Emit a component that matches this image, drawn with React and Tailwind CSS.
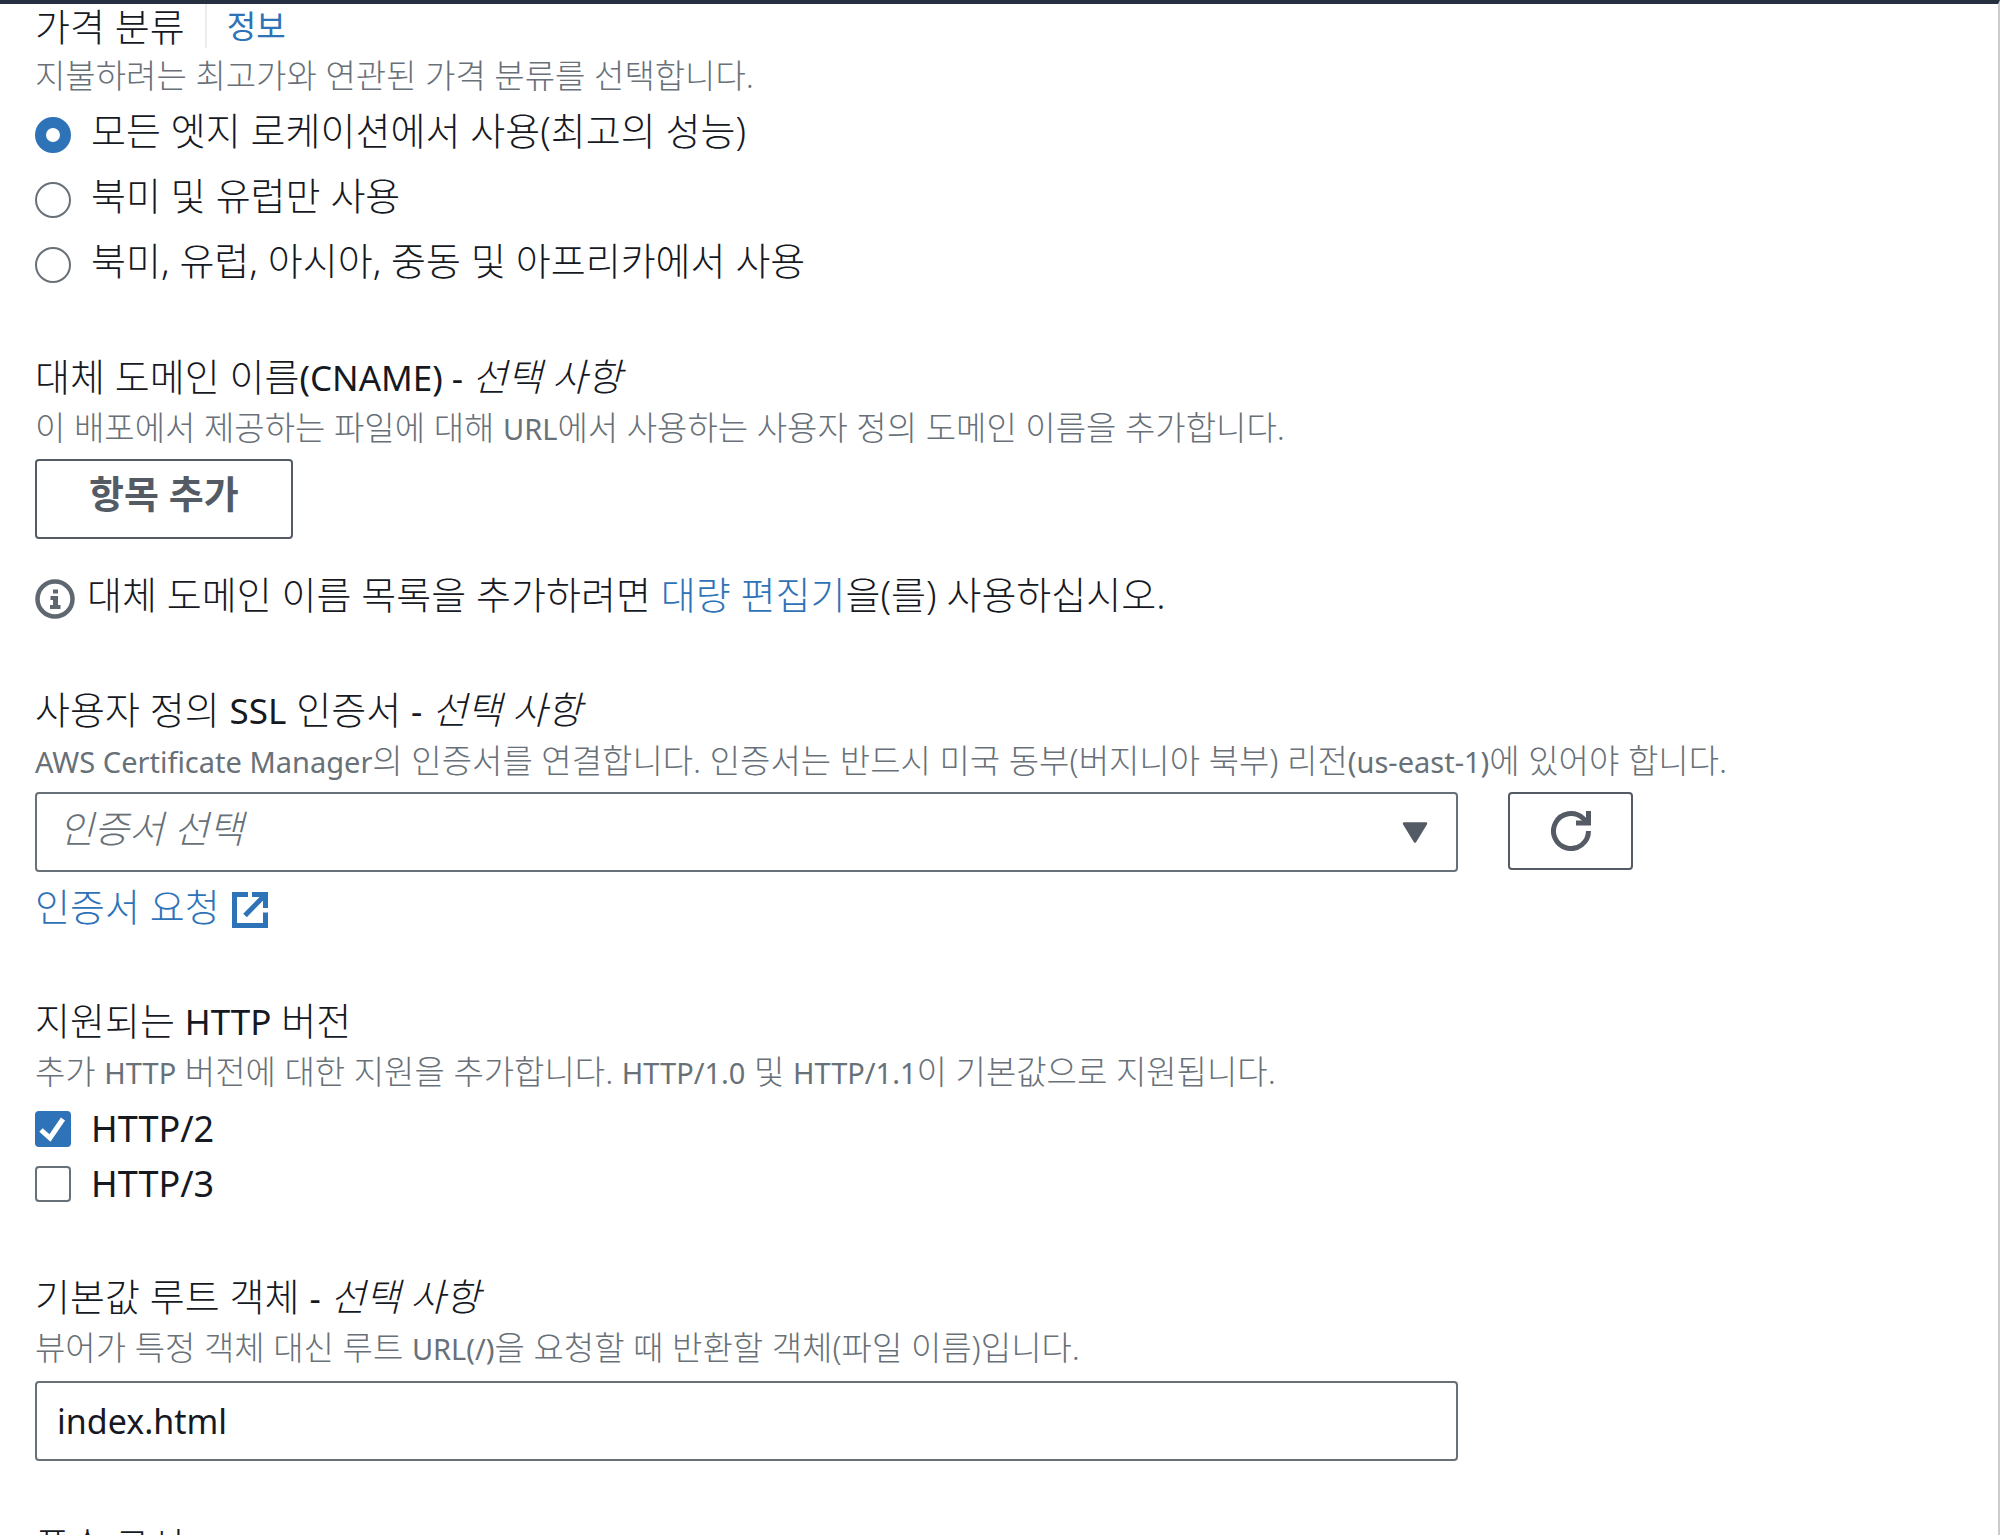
function Latin({ children }) {
  return <span className="text-[35px] font-normal">{children}</span>;
}

function SmallLatin({ children }) {
  return <span className="text-[29px] font-normal">{children}</span>;
}

function Optional() {
  return <i className="font-light">선택 사항</i>;
}

function Field({ label, description, info, htmlFor, children }) {
  const Label = htmlFor ? 'label' : 'h3';
  return (
    <section>
      <div className="flex items-center">
        <Label htmlFor={htmlFor} className="text-[38px] leading-[44px] font-light">{label}</Label>
        {info}
      </div>
      <p className="mt-1 text-[33px] leading-[48px] font-light text-[#687078]">{description}</p>
      {children}
    </section>
  );
}

function Radio({ id, children, defaultChecked }) {
  return (
    <div className="flex items-center gap-5">
      <input
        type="radio"
        name="price-class"
        id={id}
        defaultChecked={defaultChecked}
        className="mt-[10px] size-9 shrink-0 appearance-none rounded-full border-2 border-[#687078] bg-white checked:border-[11px] checked:border-[#2e73b8]"
      />
      <label htmlFor={id} className="text-[38px] leading-[48px] font-light">{children}</label>
    </div>
  );
}

function Checkbox({ id, children, defaultChecked }) {
  return (
    <div className="flex items-center gap-5">
      <span className="relative flex">
        <input
          type="checkbox"
          id={id}
          defaultChecked={defaultChecked}
          className="peer size-9 appearance-none rounded-sm border-2 border-[#687078] bg-white checked:border-[#2e73b8] checked:bg-[#2e73b8]"
        />
        <svg viewBox="0 0 36 36" className="pointer-events-none absolute inset-0 hidden size-9 peer-checked:block" fill="none" stroke="#fff" strokeWidth="5">
          <path d="M6 19l9 8L28 8" />
        </svg>
      </span>
      <label htmlFor={id} className="text-[36px] leading-[48px]">{children}</label>
    </div>
  );
}

function InfoIcon() {
  return (
    <svg viewBox="0 0 40 40" className="mt-[10px] size-10 shrink-0" fill="none" stroke="#5f6770" strokeWidth="4.500">
      <circle cx="20" cy="20" r="17.500" />
      <path d="M18 10.500h5v4h-5z" fill="#5f6770" stroke="none" />
      <path d="M15.500 17h7.500v9h2.500v4h-10.500v-4h3v-5h-2.500z" fill="#5f6770" stroke="none" />
    </svg>
  );
}

function ExternalIcon() {
  return (
    <svg viewBox="0 0 36 36" className="mt-2 size-9 shrink-0" fill="none" stroke="#2e73b8" strokeWidth="5">
      <path d="M16 2.500H2.500v31h31V20.500M20 2.500h13.500V16M33 3L13 23.500" />
    </svg>
  );
}

function RefreshIcon() {
  return (
    <svg viewBox="0 0 40 40" className="size-10" fill="none" stroke="#545b64" strokeWidth="5">
      <path d="M37.500 20A17.500 17.500 0 1 1 32 7.300L36 11" />
      <path d="M37.500 0v12H25" />
    </svg>
  );
}

function App() {
  return (
    <div className="h-screen overflow-hidden border-t-4 border-r-2 border-t-[#262f40] border-r-[#c9cdcd] bg-white font-['Noto_Sans','Noto_Sans_CJK_KR',sans-serif] text-[#16191f]">
      <main className="flex flex-col gap-[66px] pr-10 pl-[35px]">
        <Field
          label="가격 분류"
          info={
            <a href="#info" className="ml-5 border-l-2 border-[#eaeded] pl-5 text-[32px] leading-[44px] text-[#2e73b8]">정보</a>
          }
          description="지불하려는 최고가와 연관된 가격 분류를 선택합니다."
        >
          <div className="mt-[6px] flex flex-col gap-[17px] pb-1">
            <Radio id="price-all" defaultChecked>모든 엣지 로케이션에서 사용(최고의 성능)</Radio>
            <Radio id="price-na-eu">북미 및 유럽만 사용</Radio>
            <Radio id="price-regions">북미, 유럽, 아시아, 중동 및 아프리카에서 사용</Radio>
          </div>
        </Field>

        <Field
          label={<>대체 도메인 이름<Latin>(CNAME) - </Latin><Optional /></>}
          description={<>이 배포에서 제공하는 파일에 대해 <SmallLatin>URL</SmallLatin>에서 사용하는 사용자 정의 도메인 이름을 추가합니다.</>}
        >
          <button type="button" className="mt-[6px] h-20 rounded-sm border-2 border-[#545b64] px-[52px] pb-3 text-[38px] font-bold text-[#545b64]">항목 추가</button>
          <div className="mt-[30px] flex items-center gap-3 pb-[2px]">
            <InfoIcon />
            <p className="text-[38px] leading-[48px] font-light">
              대체 도메인 이름 목록을 추가하려면 <a href="#bulk" className="text-[#2e73b8]">대량 편집기</a>을(를) 사용하십시오.
            </p>
          </div>
        </Field>

        <Field
          htmlFor="certificate"
          label={<>사용자 정의 <Latin>SSL</Latin> 인증서 <Latin>-</Latin> <Optional /></>}
          description={<><SmallLatin>AWS Certificate Manager</SmallLatin>의 인증서를 연결합니다. 인증서는 반드시 미국 동부(버지니아 북부) 리전<SmallLatin>(us-east-1)</SmallLatin>에 있어야 합니다.</>}
        >
          <div className="mt-[6px] flex items-start gap-[50px]">
            <div className="relative w-[74%]">
              <select id="certificate" className="h-20 w-full appearance-none rounded-sm border-2 border-[#687078] bg-white px-[22px] pb-2 text-[38px] font-light text-[#687078] italic">
                <option>인증서 선택</option>
              </select>
              <svg viewBox="0 0 26 22" className="pointer-events-none absolute top-[30px] right-[30px] h-[22px] w-[26px]">
                <path d="M2 1.500h22L13 19.500z" fill="#545b64" stroke="#545b64" strokeWidth="2.500" strokeLinejoin="round" />
              </svg>
            </div>
            <button type="button" aria-label="새로 고침" className="flex h-[78px] w-[125px] items-center justify-center rounded-sm border-2 border-[#545b64]">
              <RefreshIcon />
            </button>
          </div>
          <a href="#request" className="mt-[10px] mb-[2px] inline-flex items-center gap-3 text-[38px] leading-[48px] font-light text-[#2e73b8]">
            인증서 요청 <ExternalIcon />
          </a>
        </Field>

        <Field
          label={<>지원되는 <Latin>HTTP</Latin> 버전</>}
          description={<>추가 <SmallLatin>HTTP</SmallLatin> 버전에 대한 지원을 추가합니다. <SmallLatin>HTTP/1.0</SmallLatin> 및 <SmallLatin>HTTP/1.1</SmallLatin>이 기본값으로 지원됩니다.</>}
        >
          <div className="mt-2 flex flex-col gap-[7px]">
            <Checkbox id="http2" defaultChecked>HTTP/2</Checkbox>
            <Checkbox id="http3">HTTP/3</Checkbox>
          </div>
        </Field>

        <Field
          htmlFor="root-object"
          label={<>기본값 루트 객체 <Latin>-</Latin> <Optional /></>}
          description={<>뷰어가 특정 객체 대신 루트 <SmallLatin>URL(/)</SmallLatin>을 요청할 때 반환할 객체(파일 이름)입니다.</>}
        >
          <input id="root-object" type="text" defaultValue="index.html" className="mt-2 h-20 w-[74%] rounded-sm border-2 border-[#687078] px-5 text-[34px]" />
        </Field>

        <h3 className="-mt-1 text-[38px] leading-[44px] font-light">풍속 구성</h3>
      </main>
    </div>
  );
}

export default App;
